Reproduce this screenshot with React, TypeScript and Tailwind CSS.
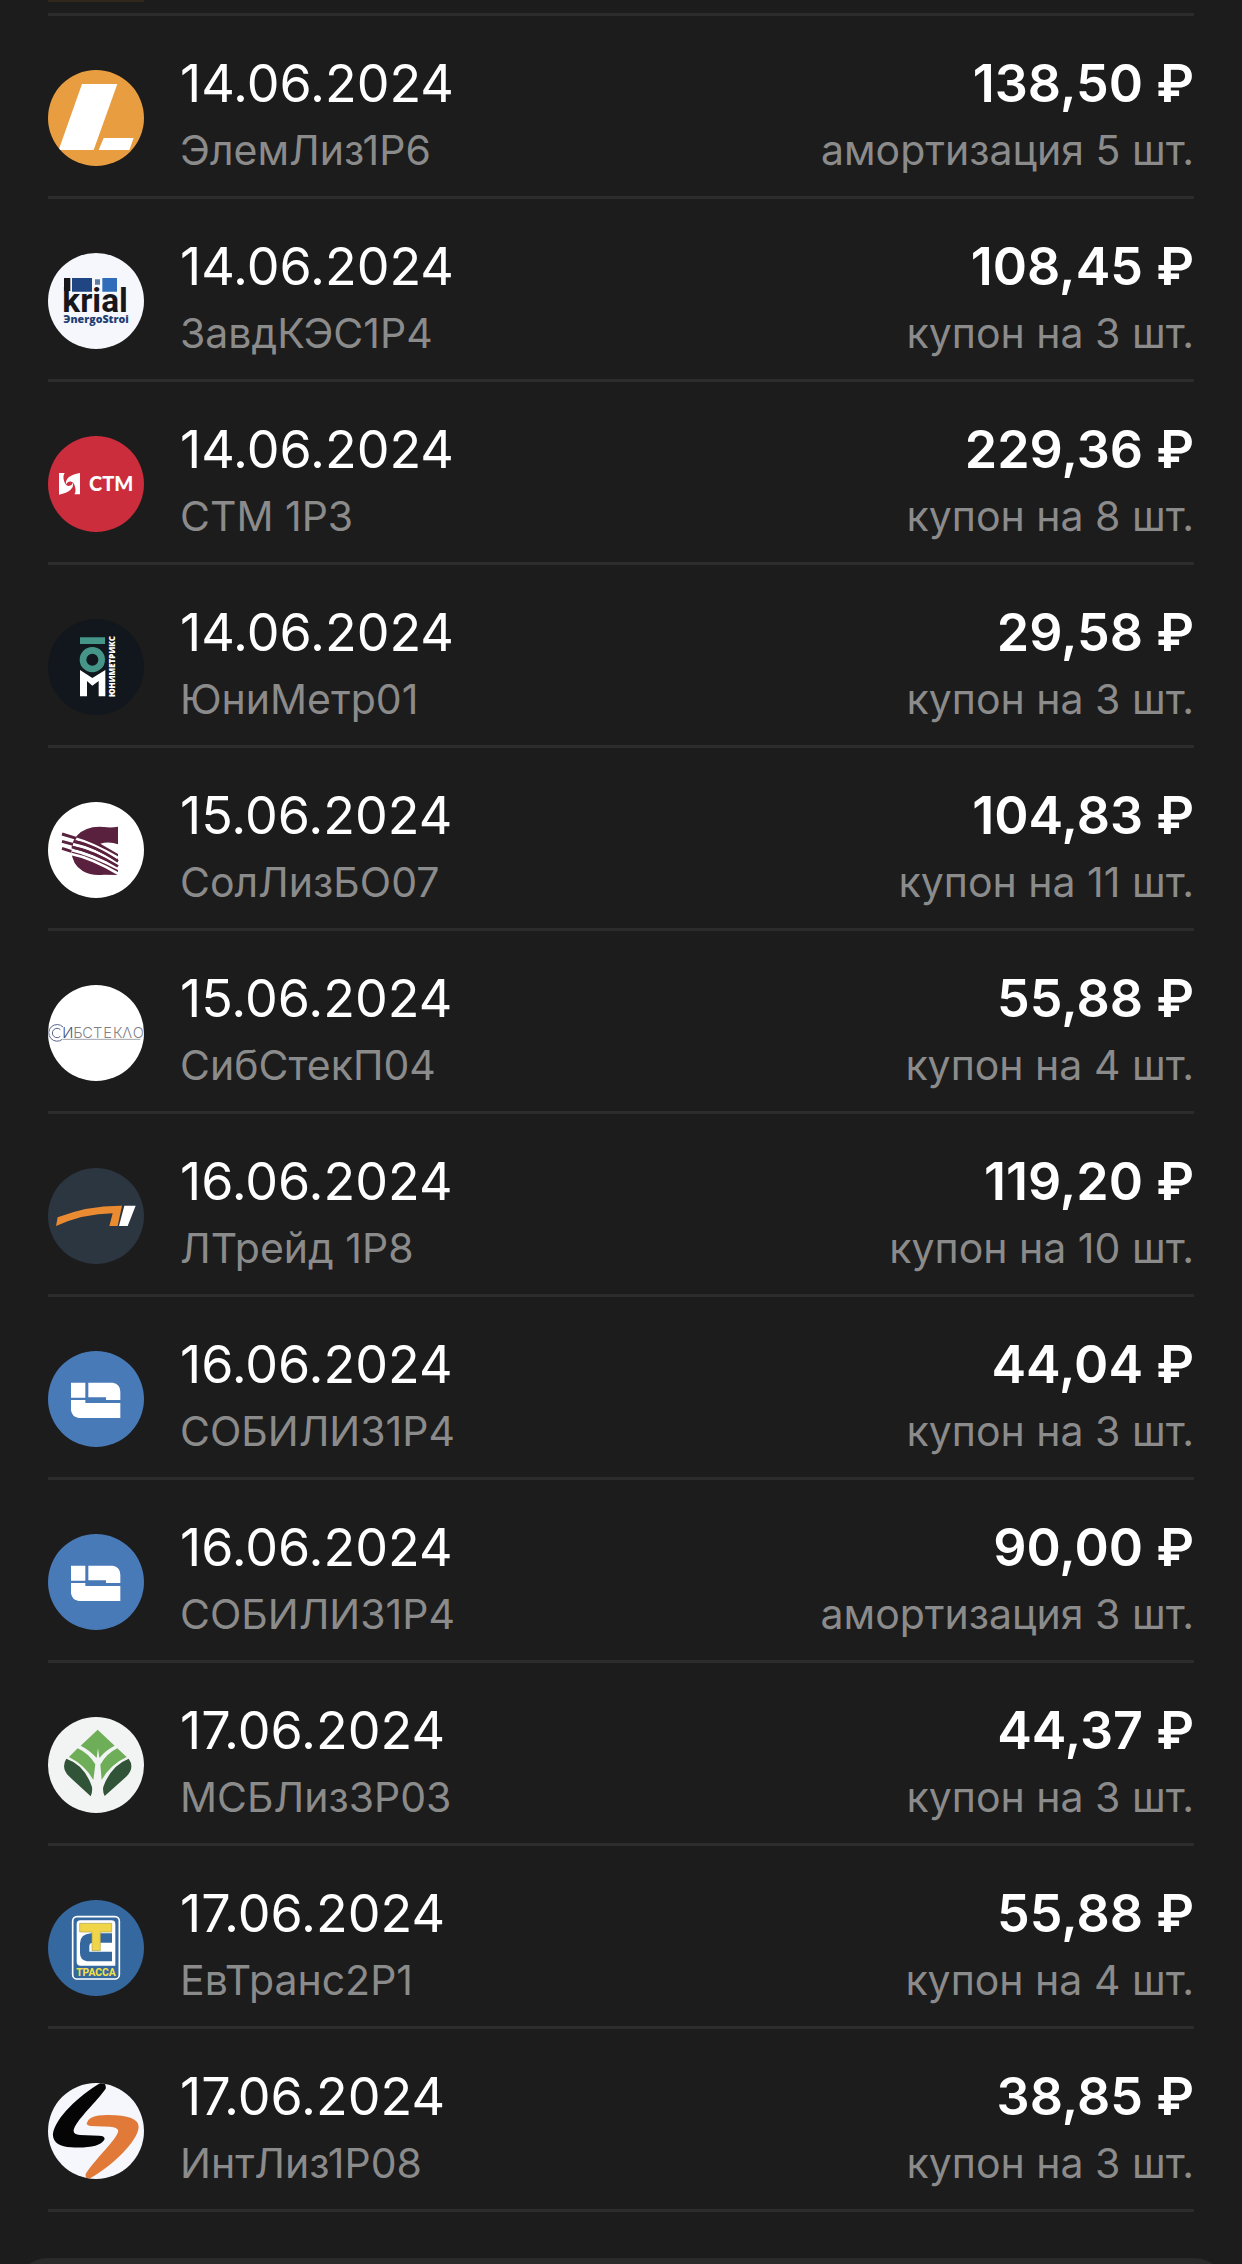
import type { ReactNode } from "react";

type Payment = {
  id: number;
  date: string;
  bond: string;
  amount: string;
  note: string;
  logo: ReactNode;
};

function Logo({ box, bg, children }: { box: string; bg: string; children: ReactNode }) {
  return (
    <svg viewBox={box} className={`size-24 shrink-0 rounded-full ${bg}`} aria-hidden="true">
      {children}
    </svg>
  );
}

const ElementLogo = () => (
  <Logo box="144 210 288 288" bg="bg-[#e79d40]">
    <path fill="#fff" d="M246 252H352L281 450H176Z" />
    <path fill="#fff" d="M311 414H401L388 450H296Z" />
  </Logo>
);

const KrialLogo = () => (
  <Logo box="54 54 288 288" bg="bg-[#f5f7fc]">
    <text x="97" y="230" fontSize="100" fontWeight="700" fill="#17171b" fontFamily="Roboto, sans-serif">
      krial
    </text>
    <path fill="#1f4583" d="M126 129H186V170H126Z" />
    <path fill="#5d7ea0" d="M195 133H210V149H195Z" />
    <path fill="#2f6dba" d="M217 129H261V170H217Z" />
    <path fill="#17171b" d="M102 129H121V168H102Z" />
    <text x="100" y="264" fontSize="32" fontWeight="800" fill="#1f3f74" fontFamily="Open Sans, sans-serif">
      ЭnergoStroi
    </text>
  </Logo>
);

const StmLogo = () => (
  <Logo box="54 48 288 288" bg="bg-[#cc2d3c]">
    <path fill="#fff" d="M87 159H104Q97 170 103 185C107 202 126 201 129 187Q134 215 87 224Z" />
    <path fill="#fff" d="M150 223H133Q140 212 134 197C130 180 111 181 108 195Q103 167 150 159Z" />
    <text x="177" y="212" fontSize="60" fontWeight="900" fill="#fff" fontFamily="Lato, sans-serif">
      СТМ
    </text>
  </Logo>
);

const UnimetrixLogo = () => (
  <Logo box="54 57 288 288" bg="bg-[#11171c]">
    <path fill="#459689" d="M150 112H225V132H150Z" />
    <circle cx="187" cy="179" r="28" fill="none" stroke="#459689" strokeWidth="20" />
    <path fill="#fff" d="M150 210L187 234L226 210V289H206V243L187 257L171 243V289H150Z" />
    <text transform="translate(254 291) rotate(-90)" fontSize="24" fontWeight="800" fill="#fff" fontFamily="Open Sans, sans-serif">
      ЮНИМЕТРИКС
    </text>
  </Logo>
);

const SolLogo = () => (
  <Logo box="54 51 288 288" bg="bg-white">
    <path fill="#5a213f" d="M264 125Q243 129 222 126Q170 121 142 151Q124 170 124 197Q126 238 158 258Q185 274 222 269L264 270V174Q237 167 211 176L264 208Z" />
    <g fill="none">
      <path stroke="#fff" strokeWidth="9" d="M136 161Q185 174 264 219M128 178Q188 190 266 237M123 194Q184 208 266 251" />
      <path stroke="#fff" strokeWidth="8" d="M124 207Q184 219 266 267" />
      <path stroke="#5a213f" strokeWidth="9" d="M96 147L139 160M96 169L129 178M96 190L124 199" />
      <path stroke="#5a213f" strokeWidth="8" d="M136 170Q190 180 264 229M129 187Q190 199 264 244" />
    </g>
    <path fill="#fff" d="M211 176Q238 168 264 178V207Z" />
  </Logo>
);

const SibstekloLogo = () => (
  <Logo box="54 45 288 288" bg="bg-white">
    <path fill="none" stroke="#5b6689" strokeWidth="3" d="M99 171A25 25 0 1 0 97 208M91 179A14 14 0 1 0 91 199" />
    <path stroke="#a2a4aa" strokeWidth="3" d="M98 208H331" />
    <text y="204" fontSize="44" fontWeight="300" fill="#7f8188" fontFamily="Inter, sans-serif">
      <tspan x="97" fill="#3f4f80">И</tspan>
      <tspan x="130">Б</tspan>
      <tspan x="157">С</tspan>
      <tspan x="189">Т</tspan>
      <tspan x="220">Е</tspan>
      <tspan x="249">К</tspan>
      <tspan x="277">Λ</tspan>
      <tspan x="308">О</tspan>
    </text>
  </Logo>
);

const TradeLogo = () => (
  <Logo box="54 54 288 288" bg="bg-[#2c3640]">
    <path fill="#ea8b31" d="M83 202Q173 166 276 167L263 228H238L248 190Q161 191 78 228Z" />
    <path fill="#fff" d="M283 167H317L293 228H267Z" />
  </Logo>
);

const SobyLogo = () => (
  <Logo box="54 603 288 288" bg="bg-[#497ab8]">
    <path fill="#fff" d="M123 698H166V743H123ZM175 698H248Q271 702 271 725V750H228V742H175ZM123 750H166V759H271V804H146Q126 801 123 781Z" />
  </Logo>
);

const MsbLogo = () => (
  <Logo box="54 51 288 288" bg="bg-[#f2f3f3]">
    <path fill="#6fae58" d="M203 89L254 137Q226 151 208 174L204 145L200 174Q180 151 152 137ZM143 145Q176 160 196 193L190 240Q167 197 117 171ZM262 145L290 171Q241 193 215 240L211 194Q229 161 262 145Z" />
    <path fill="#315337" d="M109 176Q164 195 186 261Q188 276 182 289L117 229Q92 203 109 176ZM296 176Q315 202 290 229L224 288Q217 275 220 260Q243 197 296 176Z" />
  </Logo>
);

const TrassaLogo = () => (
  <Logo box="54 60 288 288" bg="bg-[#35689f]">
    <rect x="128" y="110" width="140" height="187" rx="13" fill="none" stroke="#fff" strokeWidth="5" />
    <path fill="#fff" d="M151 121H245Q256 121 256 132V257H152Q140 257 140 245V132Q140 121 151 121Z" />
    <path fill="#35689f" d="M183 160H246V188H190Q178 188 178 198V215H246V244H171Q150 240 150 219V190Q151 162 183 160Z" />
    <path fill="#f1d548" stroke="#aaa15b" strokeWidth="2" d="M149 130H245V156H211V212H186V156H149Z" />
    <text x="198" y="288" textAnchor="middle" fontSize="31" fontWeight="800" fill="#f1df4a" fontFamily="Roboto, sans-serif">
      ТРАССА
    </text>
  </Logo>
);

const IntLogo = () => (
  <Logo box="54 54 288 288" bg="bg-[#f6f7fc]">
    <path fill="#050505" d="M215 52Q230 55 227 71C199 111 146 157 132 191Q126 208 150 210L207 212Q227 213 223 224Q207 251 123 247C90 246 66 232 69 205C77 159 146 91 215 52Z" />
    <path fill="#e17a39" d="M170 177Q174 150 230 150Q326 149 326 186C324 228 246 304 180 340Q165 344 167 327C194 284 250 234 263 204Q271 188 240 185L181 183Q172 182 170 177Z" />
  </Logo>
);

const payments: Payment[] = [
  { id: 1, date: "14.06.2024", bond: "ЭлемЛиз1Р6", amount: "138,50 ₽", note: "амортизация 5 шт.", logo: <ElementLogo /> },
  { id: 2, date: "14.06.2024", bond: "ЗавдКЭС1Р4", amount: "108,45 ₽", note: "купон на 3 шт.", logo: <KrialLogo /> },
  { id: 3, date: "14.06.2024", bond: "СТМ 1Р3", amount: "229,36 ₽", note: "купон на 8 шт.", logo: <StmLogo /> },
  { id: 4, date: "14.06.2024", bond: "ЮниМетр01", amount: "29,58 ₽", note: "купон на 3 шт.", logo: <UnimetrixLogo /> },
  { id: 5, date: "15.06.2024", bond: "СолЛизБО07", amount: "104,83 ₽", note: "купон на 11 шт.", logo: <SolLogo /> },
  { id: 6, date: "15.06.2024", bond: "СибСтекП04", amount: "55,88 ₽", note: "купон на 4 шт.", logo: <SibstekloLogo /> },
  { id: 7, date: "16.06.2024", bond: "ЛТрейд 1Р8", amount: "119,20 ₽", note: "купон на 10 шт.", logo: <TradeLogo /> },
  { id: 8, date: "16.06.2024", bond: "СОБИЛИЗ1Р4", amount: "44,04 ₽", note: "купон на 3 шт.", logo: <SobyLogo /> },
  { id: 9, date: "16.06.2024", bond: "СОБИЛИЗ1Р4", amount: "90,00 ₽", note: "амортизация 3 шт.", logo: <SobyLogo /> },
  { id: 10, date: "17.06.2024", bond: "МСБЛиз3Р03", amount: "44,37 ₽", note: "купон на 3 шт.", logo: <MsbLogo /> },
  { id: 11, date: "17.06.2024", bond: "ЕвТранс2Р1", amount: "55,88 ₽", note: "купон на 4 шт.", logo: <TrassaLogo /> },
  { id: 12, date: "17.06.2024", bond: "ИнтЛиз1Р08", amount: "38,85 ₽", note: "купон на 3 шт.", logo: <IntLogo /> },
];

function PaymentRow({ payment }: { payment: Payment }) {
  return (
    <li className="flex items-center gap-9 border-b-3 border-[#2c2c2c] pt-9 pb-3">
      {payment.logo}
      <div className="flex-1">
        <p className="text-[52px] leading-16 text-white">{payment.date}</p>
        <p className="text-[41px] leading-17 text-[#8b8b8b]">{payment.bond}</p>
      </div>
      <div className="text-right whitespace-nowrap">
        <p className="text-[52px] leading-16 font-semibold text-white">{payment.amount}</p>
        <p className="text-[41px] leading-17 text-[#8b8b8b]">{payment.note}</p>
      </div>
    </li>
  );
}

export default function App() {
  return (
    <main className="min-h-screen overflow-hidden bg-[#1c1c1c] font-['Inter','Liberation_Sans',sans-serif]">
      <div className="mx-12 h-4 border-b-3 border-[#2c2c2c]">
        <div className="h-0.5 w-24 bg-[#30261b]" />
      </div>
      <ul className="mx-12">
        {payments.map((payment) => (
          <PaymentRow key={payment.id} payment={payment} />
        ))}
      </ul>
      {/* top edge of the next panel */}
      <div className="mx-4 mt-[46px] h-1.5 overflow-hidden">
        <div className="h-16 rounded-t-[32px] bg-[#2a2a2a]" />
      </div>
    </main>
  );
}
